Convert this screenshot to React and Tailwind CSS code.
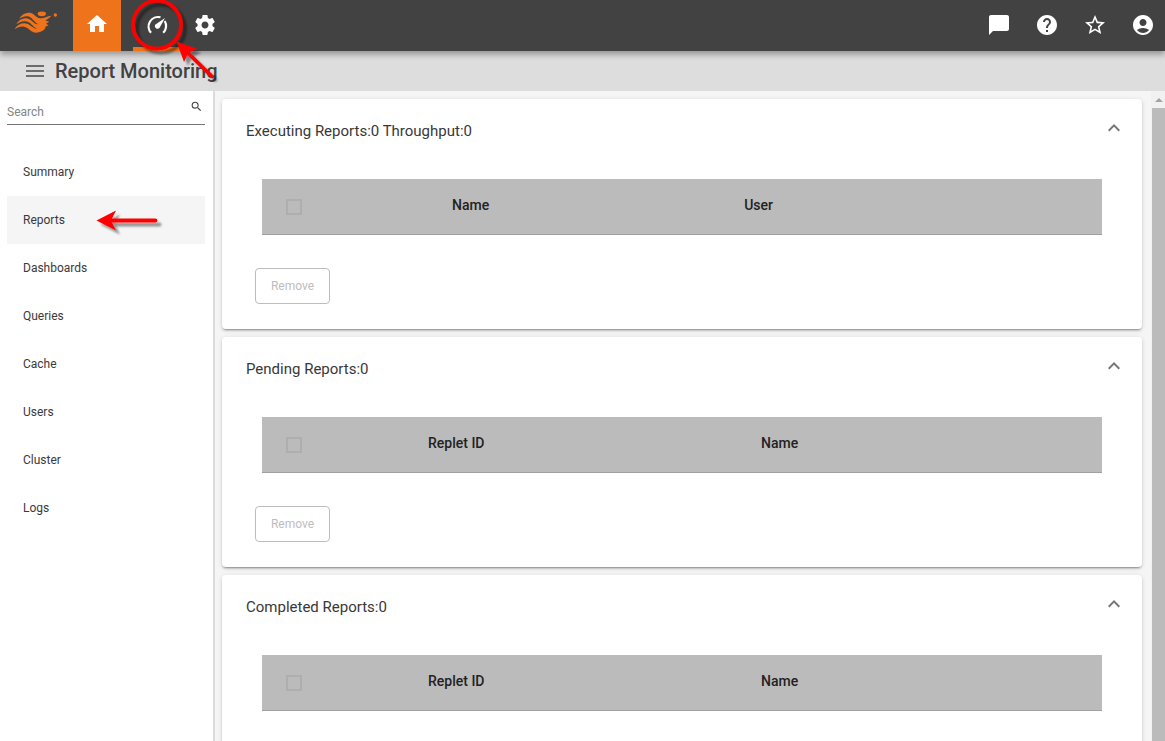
import React from "react";
import {
  MdHome,
  MdChatBubble,
  MdHelp,
  MdStarBorder,
  MdAccountCircle,
  MdSearch,
  MdExpandLess,
} from "react-icons/md";

const NAV = ["Summary", "Reports", "Dashboards", "Queries", "Cache", "Users", "Cluster", "Logs"];

const PANELS = [
  { title: "Executing Reports:0 Throughput:0", cols: ["Name", "User"], pad: ["pl-[150px]", "pl-[255px]"] },
  { title: "Pending Reports:0", cols: ["Replet ID", "Name"], pad: ["pl-[126px]", "pl-[276.5px]"] },
  { title: "Completed Reports:0", cols: ["Replet ID", "Name"], pad: ["pl-[126px]", "pl-[276.5px]"] },
];

function Logo() {
  return (
    <svg viewBox="45 30 132 72" className="h-6 w-11" fill="#ee731b">
      <ellipse cx="125.500" cy="41.500" rx="12.500" ry="7" />
      <circle cx="166" cy="45" r="5" />
      <path d="M57 56C66 42 80 35 93 39C105 43 108 54 121 55C133 55 142 48 154 47C148 55 139 57 137 62L148 65L138 71L146 76L136 80C139 90 120 98 108 98C92 97 87 83 72 80C61 78 53 84 44 87C51 76 62 69 75 70C91 72 99 87 111 86C97 80 93 66 77 64C66 62 57 69 49 72C56 60 68 53 80 55C96 58 101 74 114 73C101 66 97 51 83 49C73 48 66 53 57 56Z" />
    </svg>
  );
}

function GaugeIcon() {
  return (
    <svg viewBox="0 0 24 24" className="size-6" fill="none">
      <path d="M6 19.800A9.500 9.500 0 0 1 15.500 4.300M19.700 8A9.500 9.500 0 0 1 18.200 19.800" stroke="#fff" strokeWidth="2.200" />
      <path d="M20 5L14.600 14.700A2.600 2.600 0 1 1 10.500 11.500Z" fill="#fff" />
    </svg>
  );
}

function GearIcon() {
  return (
    <svg viewBox="0 0 24 24" className="size-6" fill="currentColor">
      <path d="M19.43 12.98c.04-.32.07-.64.07-.98s-.03-.66-.07-.98l2.11-1.65c.19-.15.24-.42.12-.64l-2-3.46c-.12-.22-.39-.3-.61-.22l-2.490 1c-.52-.4-1.080-.73-1.690-.98l-.38-2.650C14.460 2.180 14.250 2 14 2h-4c-.25 0-.46.18-.49.42l-.38 2.650c-.61.25-1.170.59-1.690.98l-2.490-1c-.23-.09-.49 0-.61.22l-2 3.460c-.13.22-.07.49.12.64l2.110 1.650c-.04.32-.07.65-.07.98s.03.66.07.98l-2.110 1.650c-.19.15-.24.42-.12.64l2 3.460c.12.22.39.3.61.22l2.490-1c.52.4 1.080.73 1.690.98l.38 2.650c.03.24.24.42.49.42h4c.25 0 .46-.18.49-.42l.38-2.650c.61-.25 1.170-.59 1.690-.98l2.490 1c.23.09.49 0 .61-.22l2-3.460c.12-.22.07-.49-.12-.64l-2.110-1.650zM12 15.500c-1.930 0-3.500-1.570-3.500-3.500s1.570-3.500 3.500-3.500 3.500 1.570 3.500 3.500-1.570 3.500-3.500 3.500z" />
    </svg>
  );
}

function Header() {
  return (
    <header className="relative z-10 flex h-[51px] shrink-0 items-stretch bg-[#424242] text-white shadow-[0_3px_5px_-1px_rgba(0,0,0,0.22),0_5px_5px_0_rgba(0,0,0,0.14)]">
      <div className="w-[73px] pt-[10px] pl-[15px]">
        <Logo />
      </div>
      <div className="flex w-12 justify-center bg-[#ee731b] pt-3">
        <MdHome className="size-6" />
      </div>
      <div className="ml-3 flex w-12 justify-center border-b-4 border-[#ee731b] pt-[13px]">
        <GaugeIcon />
      </div>
      <div className="flex w-12 justify-center pt-[13px]">
        <GearIcon />
      </div>
      <div className="ml-auto flex gap-6 pt-[13px] pr-[10px]">
        <MdChatBubble className="size-6" />
        <MdHelp className="size-6" />
        <MdStarBorder className="size-6" />
        <MdAccountCircle className="size-6" />
      </div>
    </header>
  );
}

function Sidebar() {
  return (
    <aside className="w-[215px] shrink-0 border-r-2 border-[#dcdcdc] bg-white px-[7px]">
      <div className="flex h-[34px] w-[198px] border-b border-[#757575] text-xs text-[#858585]">
        <span className="pt-[13px]">Search</span>
        <MdSearch className="mt-[9px] mr-[2px] ml-auto size-[13px] text-[#424242]" />
      </div>
      <nav className="mt-[23px] flex w-[198px] flex-col text-xs text-[#3a3a3a]">
        {NAV.map((n) => (
          <a key={n} className={"flex h-12 items-center pl-4 " + (n === "Reports" ? "bg-[#f5f5f5]" : "")}>
            {n}
          </a>
        ))}
      </nav>
    </aside>
  );
}

function Panel({ title, cols, pad }) {
  return (
    <section className="h-[230px] shrink-0 rounded bg-white shadow-[0_3px_1px_-2px_rgba(0,0,0,0.2),0_2px_2px_0_rgba(0,0,0,0.14),0_1px_5px_0_rgba(0,0,0,0.12)]">
      <div className="flex h-16 items-center justify-between pr-4 pl-6 text-[15px] text-[#383838]">
        <span>{title}</span>
        <MdExpandLess className="mb-1.5 size-6 text-[#757575]" />
      </div>
      <div className="mx-10 mt-4 flex h-14 items-center border-b border-[#a0a0a0] bg-[#bbb] pl-6 text-sm font-medium text-[#222]">
        <div className="size-4 border-2 border-[#aeaeae]" />
        <span className={"pb-[3px] " + pad[0]}>{cols[0]}</span>
        <span className={"pb-[3px] " + pad[1]}>{cols[1]}</span>
      </div>
      <button className="mt-[33px] ml-[33px] flex h-9 w-[75px] items-center justify-center rounded border border-[#bdbdbd] text-xs text-[#bdbdbd]">
        Remove
      </button>
    </section>
  );
}

function Annotations() {
  return (
    <svg className="pointer-events-none absolute top-0 left-0 z-20 h-[240px] w-[260px]" viewBox="0 0 260 240">
      <defs>
        <filter id="mark" filterUnits="userSpaceOnUse" x="80" y="-10" width="180" height="250">
          <feDropShadow dx="4" dy="4" stdDeviation="1.300" floodColor="#000" floodOpacity="0.4" />
        </filter>
      </defs>
      <g fill="none" stroke="#f00" strokeWidth="3.800" strokeLinecap="round">
        <circle cx="157" cy="24.700" r="24" filter="url(#mark)" />
        <g filter="url(#mark)">
          <path d="M188 53L211.500 76" />
          <path d="M176.500 41.500L197.500 49L188.500 52.500L184 62Z" fill="#f00" stroke="none" />
        </g>
        <g filter="url(#mark)">
          <path d="M110 220.500H155.500" />
          <path d="M96.500 220.500L116 210.500L111 220.500L116 230.500Z" fill="#f00" stroke="none" />
        </g>
      </g>
    </svg>
  );
}

export default function App() {
  return (
    <div className="relative flex h-[741px] w-[1165px] flex-col overflow-hidden bg-[#f5f5f5] font-['Roboto',sans-serif]">
      <Header />
      <div className="flex h-10 shrink-0 items-center gap-[11px] bg-[#ddd] pl-[26px]">
        <div className="flex w-[18px] flex-col gap-[3px]">
          <div className="h-[2px] bg-[#6c6c6c]" />
          <div className="h-[2px] bg-[#6c6c6c]" />
          <div className="h-[2px] bg-[#6c6c6c]" />
        </div>
        <h1 className="text-xl font-medium text-[#424242]">Report Monitoring</h1>
      </div>
      <div className="flex min-h-0 flex-1">
        <Sidebar />
        <main className="flex min-w-0 flex-1 flex-col gap-2 overflow-hidden pt-2 pr-[9px] pl-[7px]">
          {PANELS.map((p) => (
            <Panel key={p.title} {...p} />
          ))}
        </main>
        <div className="flex w-[14px] shrink-0 flex-col items-end bg-[#f1f1f1]">
          <div className="flex h-[17px] w-[13px] items-center justify-center">
            <svg viewBox="0 0 8 4" className="h-1 w-2" fill="#a3a3a3">
              <path d="M4 0L8 4H0Z" />
            </svg>
          </div>
          <div className="w-[13px] flex-1 bg-[#bbb]" />
        </div>
      </div>
      <Annotations />
    </div>
  );
}
